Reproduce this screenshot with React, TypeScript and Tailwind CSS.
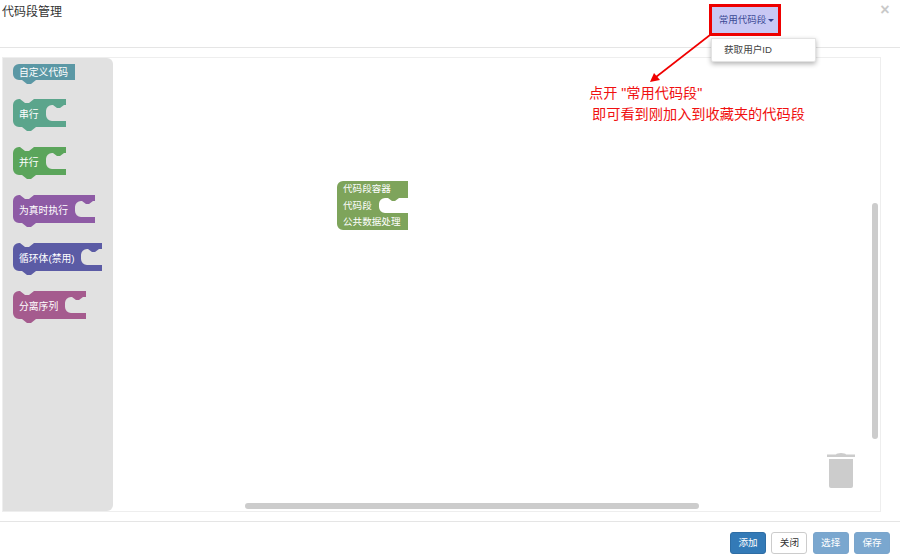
import React from "react";

const FONT = '"Liberation Sans", "Noto Sans CJK SC", sans-serif';

// dent on top, tab underneath, and a c-shaped mouth on the right
const statementPath = (w: number, mouth: number) =>
  `M0,6 a6,6 0 0 1 6,-6 H7 l5,4 h4 l5,-4 H${w} V6 H${mouth + 18} l-4,3 h-3 l-4,-3 H${mouth + 6} a6,6 0 0 0 -6,6 V16 a6,6 0 0 0 6,6 H${w} V28 H23 l-5,4 h-4 l-5,-4 H6 a6,6 0 0 1 -6,-6 Z`;

interface StatementBlockProps {
  label: string;
  width: number;
  mouth: number;
  color: string;
}

const StatementBlock: React.FC<StatementBlockProps> = ({ label, width, mouth, color }) => (
  <svg width={width} height={33} viewBox={`0 0 ${width} 33`}>
    <path d={statementPath(width, mouth)} fill={color} />
    <text x={6} y={18.5} fontSize={9.8} fill="#fff" fontFamily={FONT}>
      {label}
    </text>
  </svg>
);

const App: React.FC = () => {
  return (
    <div className="relative w-[900px] h-[557px] flex flex-col bg-white overflow-hidden text-[#333] font-['Liberation_Sans','Noto_Sans_CJK_SC',sans-serif]">
      {/* header */}
      <div className="relative h-[48px] border-b border-[#e5e5e5] pl-[2px] pt-[4px] shrink-0">
        <div className="text-[12px] leading-[17px]">代码段管理</div>
        <div className="absolute left-[709px] top-[4px] w-[72px] h-[32px] pl-[3px] border-[3px] border-[#ee0000] bg-[#c8c8f4] flex items-center justify-center text-[#3b4a94] text-[9.5px]">
          常用代码段
          <span className="ml-[2px] mt-[1px] w-0 h-0 border-x-[3px] border-x-transparent border-t-[3px] border-t-[#2f3f8f]" />
        </div>
        <div className="absolute left-[875px] top-[1px] w-[20px] text-center text-[16px] font-bold leading-[18px] text-[#c9c9c9]">
          ×
        </div>
      </div>

      {/* workspace */}
      <div className="flex-1 px-[2px] pt-[9px]">
        <div className="relative w-[879px] h-[455px] border border-[#eeeeee] bg-white">
          <div className="w-[110px] h-full bg-[#e1e1e1] rounded-r-[6px] pl-[10px] pt-[6px] flex flex-col">
            <svg width={64} height={21} viewBox="0 0 64 21">
              <path
                d="M0,6 a6,6 0 0 1 6,-6 H62 V16 H23 l-5,4 h-4 l-5,-4 H6 a6,6 0 0 1 -6,-6 Z"
                fill="#5b98a5"
              />
              <text x={6} y={12} fontSize={9.8} fill="#fff" fontFamily={FONT}>
                自定义代码
              </text>
            </svg>
            <div className="flex flex-col gap-[15px] mt-[14px]">
              <StatementBlock label="串行" width={53} mouth={33} color="#5ba58c" />
              <StatementBlock label="并行" width={53} mouth={33} color="#5ba55b" />
              <StatementBlock label="为真时执行" width={82} mouth={62} color="#8e5ba5" />
              <StatementBlock label="循环体(禁用)" width={89} mouth={68} color="#5b5ba5" />
              <StatementBlock label="分离序列" width={73} mouth={52} color="#a55b8e" />
            </div>
          </div>

          {/* dropped block on the canvas */}
          <svg width={72} height={50} viewBox="0 0 72 50" className="absolute left-[334px] top-[123px]">
            <path
              d="M0,6 a6,6 0 0 1 6,-6 H71 V17 H62 l-4,3 h-3 l-4,-3 H48 a6,6 0 0 0 -6,6 V26 a6,6 0 0 0 6,6 H71 V49 H6 a6,6 0 0 1 -6,-6 Z"
              fill="#7ea45b"
            />
            <text x={6} y={11} fontSize={9.6} fill="#fff" fontFamily={FONT}>
              代码段容器
            </text>
            <text x={6} y={28} fontSize={9.6} fill="#fff" fontFamily={FONT}>
              代码段
            </text>
            <text x={6} y={44} fontSize={9.6} fill="#fff" fontFamily={FONT}>
              公共数据处理
            </text>
          </svg>

          {/* scrollbars */}
          <div className="absolute left-[869px] top-[145px] w-[6px] h-[236px] rounded-[3px] bg-[#cccccc]" />
          <div className="absolute left-[242px] top-[445px] w-[454px] h-[6px] rounded-[3px] bg-[#cccccc]" />

          {/* trash */}
          <svg width={28} height={36} viewBox="0 0 28 36" className="absolute left-[824px] top-[394px]">
            <path d="M0,2.5 H9 Q10,1 14,1 Q18,1 19,2.5 H28 V5 H0 Z" fill="#cccccc" />
            <path d="M2,7 H26 V34 a2,2 0 0 1 -2,2 H4 a2,2 0 0 1 -2,-2 Z" fill="#cccccc" />
          </svg>
        </div>
      </div>

      {/* footer */}
      <div className="h-[36px] border-t border-[#e5e5e5] flex items-start justify-end gap-[5.3px] pt-[10px] pr-[10px] shrink-0 text-[9.6px]">
        <button className="w-[36px] h-[22px] rounded-[3px] bg-[#337ab7] border border-[#2e6da4] text-white">
          添加
        </button>
        <button className="w-[36px] h-[22px] rounded-[3px] bg-white border border-[#cccccc] text-[#333]">
          关闭
        </button>
        <button className="w-[36px] h-[22px] rounded-[3px] bg-[#7aa7cf] border border-[#7aa5cc] text-white">
          选择
        </button>
        <button className="w-[36px] h-[22px] rounded-[3px] bg-[#7aa7cf] border border-[#7aa5cc] text-white">
          保存
        </button>
      </div>

      {/* dropdown menu */}
      <div className="absolute left-[711px] top-[38px] w-[105px] h-[24px] bg-white border border-[#e3e3e3] rounded-b-[2px] shadow-[0_2px_5px_rgba(0,0,0,0.3)] pl-[12px] text-[9.6px] leading-[22px] text-[#444]">
        获取用户ID
      </div>

      {/* annotation */}
      <svg width={900} height={100} viewBox="0 0 900 100" className="absolute left-0 top-0 pointer-events-none">
        <line x1={710} y1={35} x2={656} y2={77} stroke="#f00000" strokeWidth={1.6} />
        <path d="M650,82 L654,73 L660,80 Z" fill="#f00000" />
      </svg>
      <div className="absolute left-[589px] top-[83px] text-[#f01010] text-[14.2px] leading-[20px]">
        点开 "常用代码段"
      </div>
      <div className="absolute left-[592px] top-[104px] text-[#f01010] text-[14.2px] leading-[20px] whitespace-nowrap">
        即可看到刚加入到收藏夹的代码段
      </div>
    </div>
  );
};

export default App;
